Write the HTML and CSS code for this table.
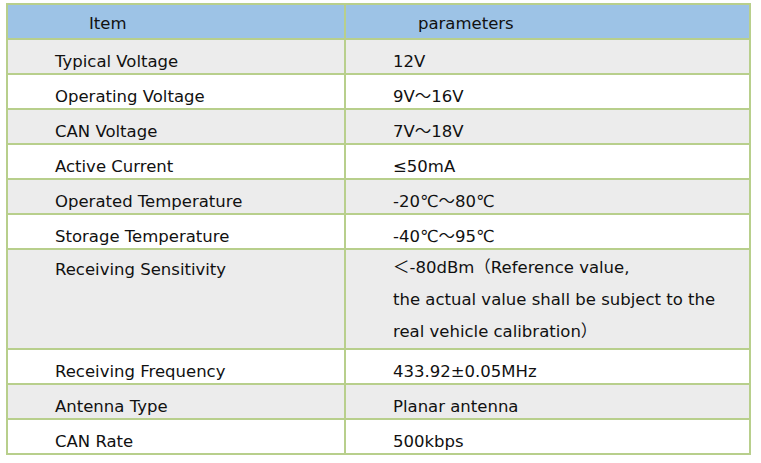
FILE: index.html
```html
<!DOCTYPE html>
<html>
<head>
<meta charset="utf-8">
<link rel="stylesheet" href="styles.css">
</head>
<body>
<table class="spec">
  <colgroup><col class="k1"><col class="k2"></colgroup>
  <thead>
    <tr class="head">
      <th class="c1">Item</th>
      <th class="c2">parameters</th>
    </tr>
  </thead>
  <tbody>
    <tr class="g"><td class="c1">Typical Voltage</td><td class="c2">12V</td></tr>
    <tr class="w"><td class="c1">Operating Voltage</td><td class="c2">9V～16V</td></tr>
    <tr class="g"><td class="c1">CAN Voltage</td><td class="c2">7V～18V</td></tr>
    <tr class="w"><td class="c1">Active Current</td><td class="c2">≤50mA</td></tr>
    <tr class="g"><td class="c1">Operated Temperature</td><td class="c2">-20℃～80℃</td></tr>
    <tr class="w"><td class="c1">Storage Temperature</td><td class="c2">-40℃～95℃</td></tr>
    <tr class="g tall"><td class="c1">Receiving Sensitivity</td><td class="c2">＜-80dBm（Reference value,<br>the actual value shall be subject to the<br>real vehicle calibration）</td></tr>
    <tr class="w"><td class="c1">Receiving Frequency</td><td class="c2">433.92±0.05MHz</td></tr>
    <tr class="g"><td class="c1">Antenna Type</td><td class="c2">Planar antenna</td></tr>
    <tr class="w"><td class="c1">CAN Rate</td><td class="c2">500kbps</td></tr>
  </tbody>
</table>
</body>
</html>
```
FILE: styles.css
```css
html, body {
  margin: 0;
  padding: 0;
  background: #ffffff;
}
body {
  padding: 3px 0 0 6px;
  font-family: "DejaVu Sans", "Noto Sans CJK SC", sans-serif;
  color: #111111;
}
.spec {
  border-collapse: collapse;
  width: 743px;
  table-layout: fixed;
  font-size: 16.5px;
}
.spec col.k1 { width: 338px; }
.spec col.k2 { width: 405px; }
.spec tr { height: 35px; }
.spec th, .spec td {
  border: 2px solid #b8cf8c;
  text-align: left;
  vertical-align: top;
  font-weight: normal;
  padding: 12px 0 0 0;
  line-height: 20px;
  white-space: nowrap;
  overflow: hidden;
}
.spec td.c1 { padding-left: 47px; }
.spec td.c2 { padding-left: 47px; }
.head th { background: #9dc3e6; padding-top: 9px; }
.head th.c1 { padding-left: 81px; }
.head th.c2 { padding-left: 72px; }
.g td { background: #ececec; }
.w td { background: #ffffff; }
.spec tr.tall { height: 100px; }
.spec .tall td { line-height: 32px; padding-top: 4px; }
.spec .tall td.c2 { line-height: 32px; padding-top: 2px; }
```
